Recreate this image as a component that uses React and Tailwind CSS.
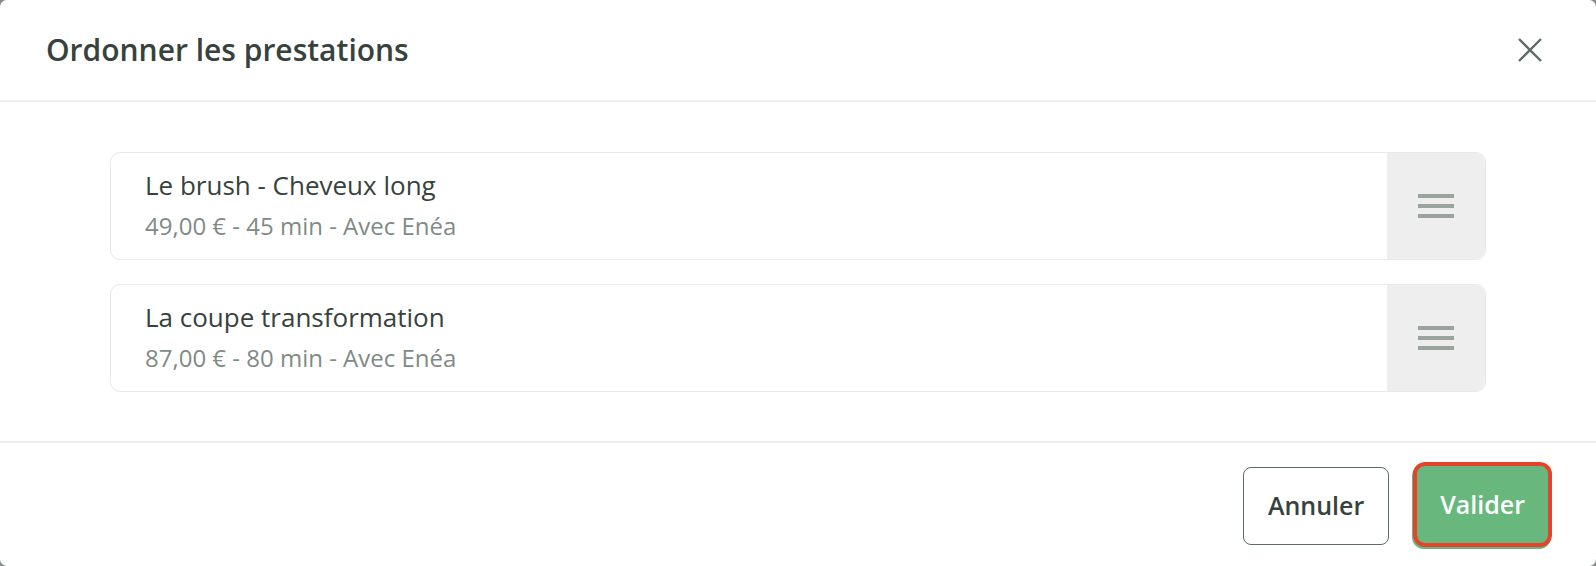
const items = [
  { id: 1, title: 'Le brush - Cheveux long', detail: '49,00 € - 45 min - Avec Enéa' },
  { id: 2, title: 'La coupe transformation', detail: '87,00 € - 80 min - Avec Enéa' },
];

function DragHandle() {
  return (
    <div className="w-[98px] shrink-0 bg-[#eeeeee] flex flex-col items-center justify-center gap-[6px]">
      <span className="block w-[36px] h-[4px] bg-[#9ba39f]"></span>
      <span className="block w-[36px] h-[4px] bg-[#9ba39f]"></span>
      <span className="block w-[36px] h-[4px] bg-[#9ba39f]"></span>
    </div>
  );
}

export default function App() {
  return (
    <div className="w-[1596px] h-[566px] bg-[#878c8a]" style={{ fontFamily: '"Open Sans", sans-serif' }}>
      <div className="w-full h-full bg-white rounded-[7px] flex flex-col">
        {/* Header */}
        <div className="h-[102px] shrink-0 flex items-center justify-between pl-[46px] pr-[54px] border-b-2 border-[#eeeeee]">
          <h2 className="text-[30px] font-semibold text-[#37423d] leading-none">Ordonner les prestations</h2>
          <button className="w-[24px] h-[24px] flex items-center justify-center text-[#5f6b66]">
            <svg width="24" height="24" viewBox="0 0 24 24" fill="none" stroke="currentColor" strokeWidth="2.4">
              <path d="M1 1 L23 23 M23 1 L1 23" />
            </svg>
          </button>
        </div>

        {/* List */}
        <div className="flex-1 px-[110px] pt-[50px] pb-[49px] flex flex-col gap-[24px]">
          {items.map((it) => (
            <div key={it.id} className="flex border border-[#e8e8e8] rounded-[10px] overflow-hidden">
              <div className="flex-1 pl-[34px] pt-[13px] pb-[15px]">
                <div className="text-[26px] leading-[38px] text-[#37423d]">{it.title}</div>
                <div className="mt-[4px] text-[24px] leading-[36px] text-[#808b86]">{it.detail}</div>
              </div>
              <DragHandle />
            </div>
          ))}
        </div>

        {/* Footer */}
        <div className="h-[125px] shrink-0 border-t-2 border-[#eeeeee] flex items-center justify-end gap-[24px] pr-[44px]">
          <button className="h-[78px] px-[24px] border-[1.5px] border-[#5f6b66] rounded-[8px] text-[25px] font-semibold text-[#37423d] mt-[3px]">
            Annuler
          </button>
          <button className="h-[85px] px-[23px] bg-[#68b87e] border-4 border-[#e5432b] rounded-[12px] text-[25px] font-semibold text-white shadow-[-1px_2px_0_#68b87e]">
            Valider
          </button>
        </div>
      </div>
    </div>
  );
}
